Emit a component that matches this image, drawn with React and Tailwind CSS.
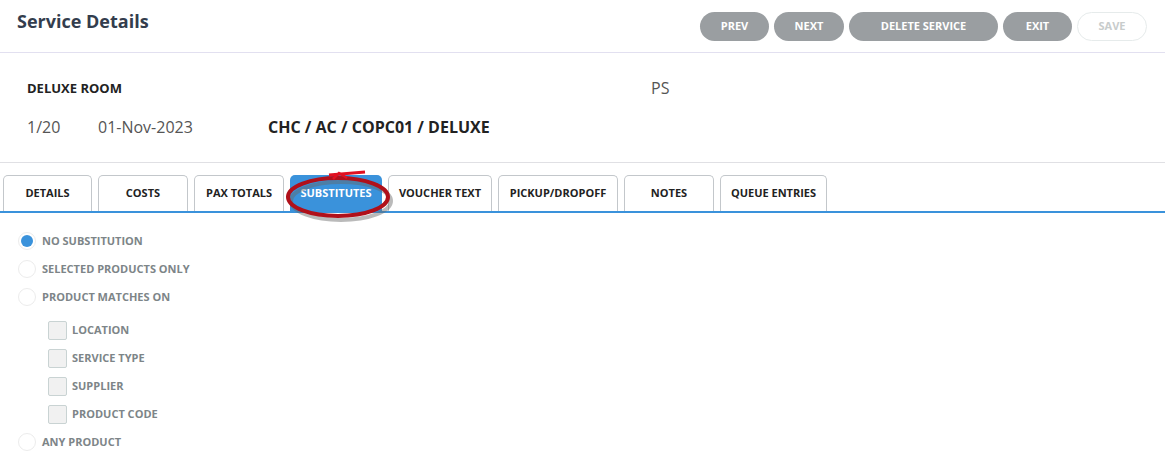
import React from "react";

const tabs = [
  { label: "DETAILS", w: "w-[89px]" },
  { label: "COSTS", w: "w-[90px]" },
  { label: "PAX TOTALS", w: "w-[90px]" },
  { label: "SUBSTITUTES", w: "w-[92px]", active: true },
  { label: "VOUCHER TEXT", w: "w-[104px]" },
  { label: "PICKUP/DROPOFF", w: "w-[120px]" },
  { label: "NOTES", w: "w-[90px]" },
  { label: "QUEUE ENTRIES", w: "w-[107px]" },
];

function Radio({ checked, label }) {
  return (
    <div className="flex items-center h-[28px]">
      <div className="ml-[18px] w-[18px] h-[18px] rounded-full bg-white border border-[#ececec] flex items-center justify-center">
        {checked && <div className="w-[12px] h-[12px] rounded-full bg-[#3a92db]" />}
      </div>
      <span className="ml-[6px] text-[11px] font-bold text-[#7d8588]">{label}</span>
    </div>
  );
}

function Check({ label }) {
  return (
    <div className="flex items-center h-[28px]">
      <div className="ml-[48px] w-[19px] h-[19px] rounded-[2px] bg-[#f1f1f1] border border-[#c9d3d3]" />
      <span className="ml-[5px] text-[11px] font-bold text-[#7d8588]">{label}</span>
    </div>
  );
}

export default function App() {
  return (
    <div className="w-[1165px] h-[457px] bg-white overflow-hidden font-['Open_Sans',sans-serif]">
      <div className="h-[53px] border-b border-[#e2e0f0] flex items-start justify-between">
        <h1 className="ml-[17px] mt-[8px] text-[18px] font-bold text-[#333d4d]">Service Details</h1>
        <div className="flex gap-[5px] mt-[12px] mr-[18px]">
          <button className="w-[69px] h-[29px] rounded-full bg-[#9a9ea1] text-white text-[11px] font-bold">PREV</button>
          <button className="w-[70px] h-[29px] rounded-full bg-[#9a9ea1] text-white text-[11px] font-bold">NEXT</button>
          <button className="w-[149px] h-[29px] rounded-full bg-[#9a9ea1] text-white text-[11px] font-bold">DELETE SERVICE</button>
          <button className="w-[69px] h-[29px] rounded-full bg-[#9a9ea1] text-white text-[11px] font-bold">EXIT</button>
          <button className="w-[70px] h-[29px] rounded-full bg-white border border-[#e6ebeb] text-[#c8cccc] text-[11px] font-bold">SAVE</button>
        </div>
      </div>

      <div className="h-[110px] border-b border-[#e0e0e4] relative">
        <div className="flex pt-[25px] items-center">
          <div className="ml-[27px] w-[624px] text-[13px] font-bold text-[#222] leading-[20px]">DELUXE ROOM</div>
          <div className="text-[16px] text-[#555] leading-[20px]">PS</div>
        </div>
        <div className="flex items-center mt-[18px] ml-[27px] leading-[22px]">
          <span className="w-[71px] text-[16px] text-[#555]">1/20</span>
          <span className="w-[170px] text-[16px] text-[#555]">01-Nov-2023</span>
          <span className="text-[16px] font-bold text-[#222]">CHC / AC / COPC01 / DELUXE</span>
        </div>
      </div>

      <div className="relative mt-[12px] border-b-2 border-[#3a92db] h-[38px] flex items-end pl-[3px] gap-[6px]">
        {tabs.map((t) => (
          <div
            key={t.label}
            className={`${t.w} h-[36px] rounded-t-[5px] flex items-center justify-center text-[11px] font-bold ${
              t.active ? "bg-[#3a92db] text-white" : "bg-white border border-b-0 border-[#c3c7cb] text-[#222]"
            }`}
          >
            {t.label}
          </div>
        ))}
        <svg className="absolute left-[283px] top-[-7px] pointer-events-none" width="112" height="54" viewBox="0 0 112 54">
          <ellipse cx="56" cy="31" rx="50" ry="19" fill="none" stroke="#666" strokeOpacity="0.45" strokeWidth="4" transform="translate(2,2)" />
          <ellipse cx="55" cy="29" rx="50" ry="19" fill="none" stroke="#b0101a" strokeWidth="4" />
          <path d="M46 7 L82 4" stroke="#e01020" strokeWidth="3" fill="none" />
          <path d="M50 11 L56 5 L64 10" stroke="#e01020" strokeWidth="2.5" fill="none" />
        </svg>
      </div>

      <div className="pt-[14px]">
        <Radio checked label="NO SUBSTITUTION" />
        <Radio label="SELECTED PRODUCTS ONLY" />
        <Radio label="PRODUCT MATCHES ON" />
        <div className="mt-[5px]">
          <Check label="LOCATION" />
          <Check label="SERVICE TYPE" />
          <Check label="SUPPLIER" />
          <Check label="PRODUCT CODE" />
        </div>
        <Radio label="ANY PRODUCT" />
      </div>
    </div>
  );
}
